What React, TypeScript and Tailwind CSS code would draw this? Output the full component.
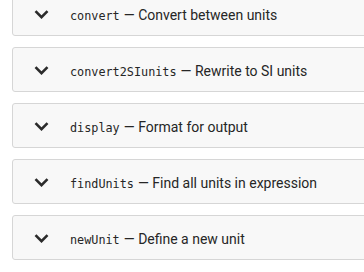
const items = [
  { name: "convert", desc: "Convert between units" },
  { name: "convert2SIunits", desc: "Rewrite to SI units" },
  { name: "display", desc: "Format for output" },
  { name: "findUnits", desc: "Find all units in expression" },
  { name: "newUnit", desc: "Define a new unit" },
];

function Chevron() {
  return (
    <svg width="15" height="9" viewBox="0 0 15 9" className="mt-[2px] shrink-0">
      <path d="M1.5 1.2 L7.5 7.2 L13.5 1.2" fill="none" stroke="#2b2b2b" strokeWidth="2.6" />
    </svg>
  );
}

export default function App() {
  return (
    <div className="h-[272px] w-[364px] overflow-hidden bg-white">
      <div className="-mt-[9px] pl-3">
        {items.map((it) => (
          <div
            key={it.name}
            className="mb-[11px] flex h-[45px] w-[400px] items-center rounded-[3px] border border-[#d6d6d6] bg-[#f8f8f8] pl-[21px]"
          >
            <Chevron />
            <div className="ml-[21px] flex items-baseline pt-[3px] text-[#262626]">
              <code className="text-[11.8px]" style={{ fontFamily: '"DejaVu Sans Mono", monospace' }}>
                {it.name}
              </code>
              <span className="ml-[4px] text-[14px]" style={{ fontFamily: 'Roboto, "Liberation Sans", sans-serif' }}>
                — {it.desc}
              </span>
            </div>
          </div>
        ))}
      </div>
    </div>
  );
}
